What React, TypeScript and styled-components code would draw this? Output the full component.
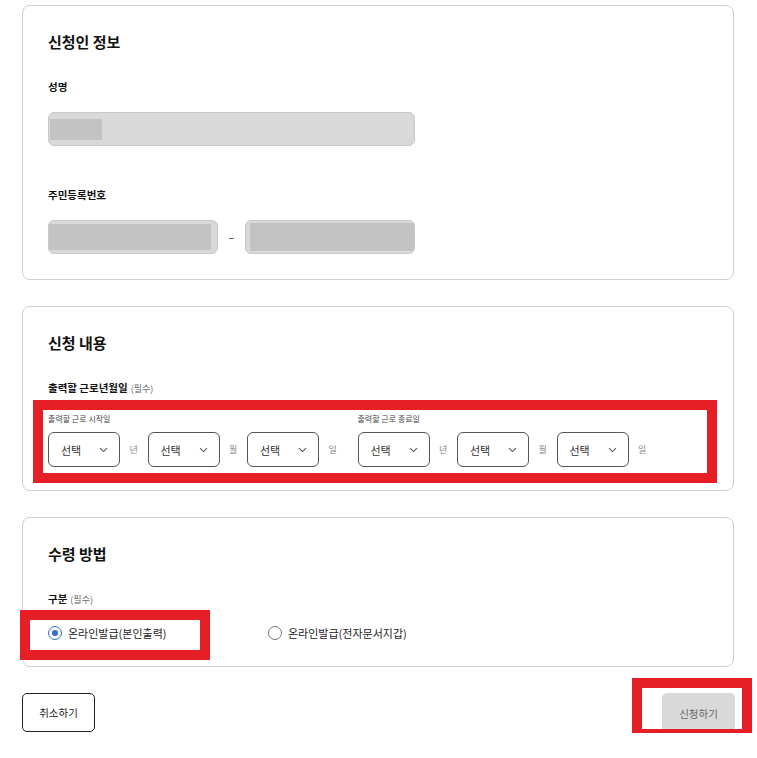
import React from "react";
import styled, { createGlobalStyle } from "styled-components";

const GlobalStyle = createGlobalStyle`
  html, body { margin: 0; padding: 0; background: #fff; }
  body {
    font-family: "Noto Sans CJK KR", "Noto Sans", sans-serif;
    color: #222;
  }
  * { box-sizing: border-box; }
`;

const RED = "#e61e25";

const Page = styled.div`
  width: 757px;
  padding: 5px 23px 0 22px;
  display: flex;
  flex-direction: column;
  gap: 26px;
`;

const Card = styled.section<{ $pb?: number }>`
  border: 1px solid #cfcfcf;
  border-radius: 8px;
  padding: 26px 26px ${(p) => p.$pb ?? 25}px 25px;
  display: flex;
  flex-direction: column;
`;

const SectionTitle = styled.h2`
  margin: 0 0 27px;
  font-size: 15px;
  line-height: 20px;
  font-weight: 700;
  color: #111;
`;

const FieldLabel = styled.div<{ $gap?: number }>`
  font-size: 10.5px;
  line-height: 16px;
  font-weight: 700;
  color: #111;
  margin-bottom: ${(p) => p.$gap ?? 17}px;
`;

const Required = styled.span`
  font-weight: 400;
  font-size: 9px;
  color: #666;
  margin-left: 3px;
`;

const FieldBlock = styled.div<{ $mb?: number }>`
  display: flex;
  flex-direction: column;
  margin-bottom: ${(p) => p.$mb ?? 0}px;
`;

const MaskedInput = styled.div<{ $w: number }>`
  width: ${(p) => p.$w}px;
  height: 34px;
  background: #d9d9d9;
  border: 1px solid #c9c9c9;
  border-radius: 6px;
  display: flex;
  align-items: center;
  overflow: hidden;
`;

const Mask = styled.span<{ $w: number; $h: number; $ml: number }>`
  display: block;
  width: ${(p) => p.$w}px;
  height: ${(p) => p.$h}px;
  margin-left: ${(p) => p.$ml}px;
  background: #c3c3c3;
`;

const InputRow = styled.div`
  display: flex;
  align-items: center;
`;

const Dash = styled.span`
  width: 27px;
  text-align: center;
  font-size: 11px;
  color: #222;
`;

const Highlight = styled.div<{ $t: number; $r: number; $b: number; $l: number }>`
  position: relative;
  display: flex;
  justify-self: start;
  &::after {
    content: "";
    position: absolute;
    top: ${(p) => p.$t}px;
    right: ${(p) => p.$r}px;
    bottom: ${(p) => p.$b}px;
    left: ${(p) => p.$l}px;
    border: 10px solid ${RED};
    pointer-events: none;
  }
`;

const DateGroups = styled.div`
  display: flex;
  gap: 11px;
`;

const DateGroup = styled.div`
  display: flex;
  flex-direction: column;
`;

const SmallLabel = styled.div`
  font-size: 8px;
  line-height: 12px;
  color: #444;
  margin-bottom: 7px;
`;

const DateRow = styled.div`
  display: flex;
  align-items: center;
`;

const SelectBox = styled.div`
  width: 72px;
  height: 35px;
  border: 1px solid #555;
  border-radius: 6px;
  display: flex;
  align-items: center;
  justify-content: space-between;
  padding: 0 11px 0 12px;
  font-size: 11px;
  color: #333;
  background: #fff;
`;

const Unit = styled.span`
  width: 27.5px;
  text-align: center;
  font-size: 9px;
  color: #888;
`;

const RadioRow = styled.div`
  display: grid;
  grid-template-columns: 220px auto;
  align-items: center;
  height: 16px;
`;

const RadioItem = styled.label<{ $w?: number }>`
  display: flex;
  align-items: center;
  gap: 6px;
  font-size: 11px;
  line-height: 16px;
  color: #222;
  width: ${(p) => (p.$w ? `${p.$w}px` : "auto")};
`;

const RadioCircle = styled.span<{ $on?: boolean }>`
  width: 14px;
  height: 14px;
  border-radius: 50%;
  border: 1px solid ${(p) => (p.$on ? "#2f6fd6" : "#777")};
  display: inline-flex;
  align-items: center;
  justify-content: center;
  flex: none;
  &::after {
    content: "";
    width: 6px;
    height: 6px;
    border-radius: 50%;
    background: ${(p) => (p.$on ? "#2f6fd6" : "transparent")};
  }
`;

const ButtonRow = styled.div`
  display: flex;
  justify-content: space-between;
  align-items: flex-start;
  margin-right: -1px;
`;

const OutlineButton = styled.button`
  width: 73px;
  height: 39px;
  border: 1px solid #222;
  border-radius: 5px;
  background: #fff;
  font-family: inherit;
  font-size: 10.5px;
  color: #222;
  padding: 0;
`;

const DisabledButton = styled.button`
  width: 73px;
  height: 40px;
  border: none;
  border-radius: 5px;
  background: #d9d9d9;
  font-family: inherit;
  font-size: 10.5px;
  color: #666;
  padding: 0;
`;

const Chevron = () => (
  <svg width="9" height="6" viewBox="0 0 9 6" fill="none">
    <path d="M1 1.2 L4.5 4.6 L8 1.2" stroke="#555" strokeWidth="1.1" />
  </svg>
);

const DateSelects = ({ label }: { label: string }) => (
  <DateGroup>
    <SmallLabel>{label}</SmallLabel>
    <DateRow>
      {["년", "월", "일"].map((u) => (
        <React.Fragment key={u}>
          <SelectBox>
            <span>선택</span>
            <Chevron />
          </SelectBox>
          <Unit>{u}</Unit>
        </React.Fragment>
      ))}
    </DateRow>
  </DateGroup>
);

export default function App() {
  return (
    <>
      <GlobalStyle />
      <Page>
        <Card>
          <SectionTitle>신청인 정보</SectionTitle>
          <FieldBlock $mb={41}>
            <FieldLabel>성명</FieldLabel>
            <MaskedInput $w={367}>
              <Mask $w={52} $h={21} $ml={1} />
            </MaskedInput>
          </FieldBlock>
          <FieldBlock>
            <FieldLabel>주민등록번호</FieldLabel>
            <InputRow>
              <MaskedInput $w={170}>
                <Mask $w={162} $h={26} $ml={0} />
              </MaskedInput>
              <Dash>–</Dash>
              <MaskedInput $w={170}>
                <Mask $w={164} $h={28} $ml={4} />
              </MaskedInput>
            </InputRow>
          </FieldBlock>
        </Card>

        <Card $pb={23}>
          <SectionTitle>신청 내용</SectionTitle>
          <FieldLabel $gap={16}>
            출력할 근로년월일<Required>(필수)</Required>
          </FieldLabel>
          <Highlight $t={-13} $r={-10} $b={-16} $l={-15}>
            <DateGroups>
              <DateSelects label="출력할 근로 시작일" />
              <DateSelects label="출력할 근로 종료일" />
            </DateGroups>
          </Highlight>
        </Card>

        <Card>
          <SectionTitle>수령 방법</SectionTitle>
          <FieldLabel $gap={17}>
            구분<Required>(필수)</Required>
          </FieldLabel>
          <RadioRow>
            <Highlight $t={-15} $r={-12} $b={-19} $l={-28}>
              <RadioItem $w={150}>
                <RadioCircle $on />
                온라인발급(본인출력)
              </RadioItem>
            </Highlight>
            <RadioItem>
              <RadioCircle />
              온라인발급(전자문서지갑)
            </RadioItem>
          </RadioRow>
        </Card>

        <ButtonRow>
          <OutlineButton>취소하기</OutlineButton>
          <Highlight $t={-15} $r={-17} $b={-6} $l={-30}>
            <DisabledButton>신청하기</DisabledButton>
          </Highlight>
        </ButtonRow>
      </Page>
    </>
  );
}
